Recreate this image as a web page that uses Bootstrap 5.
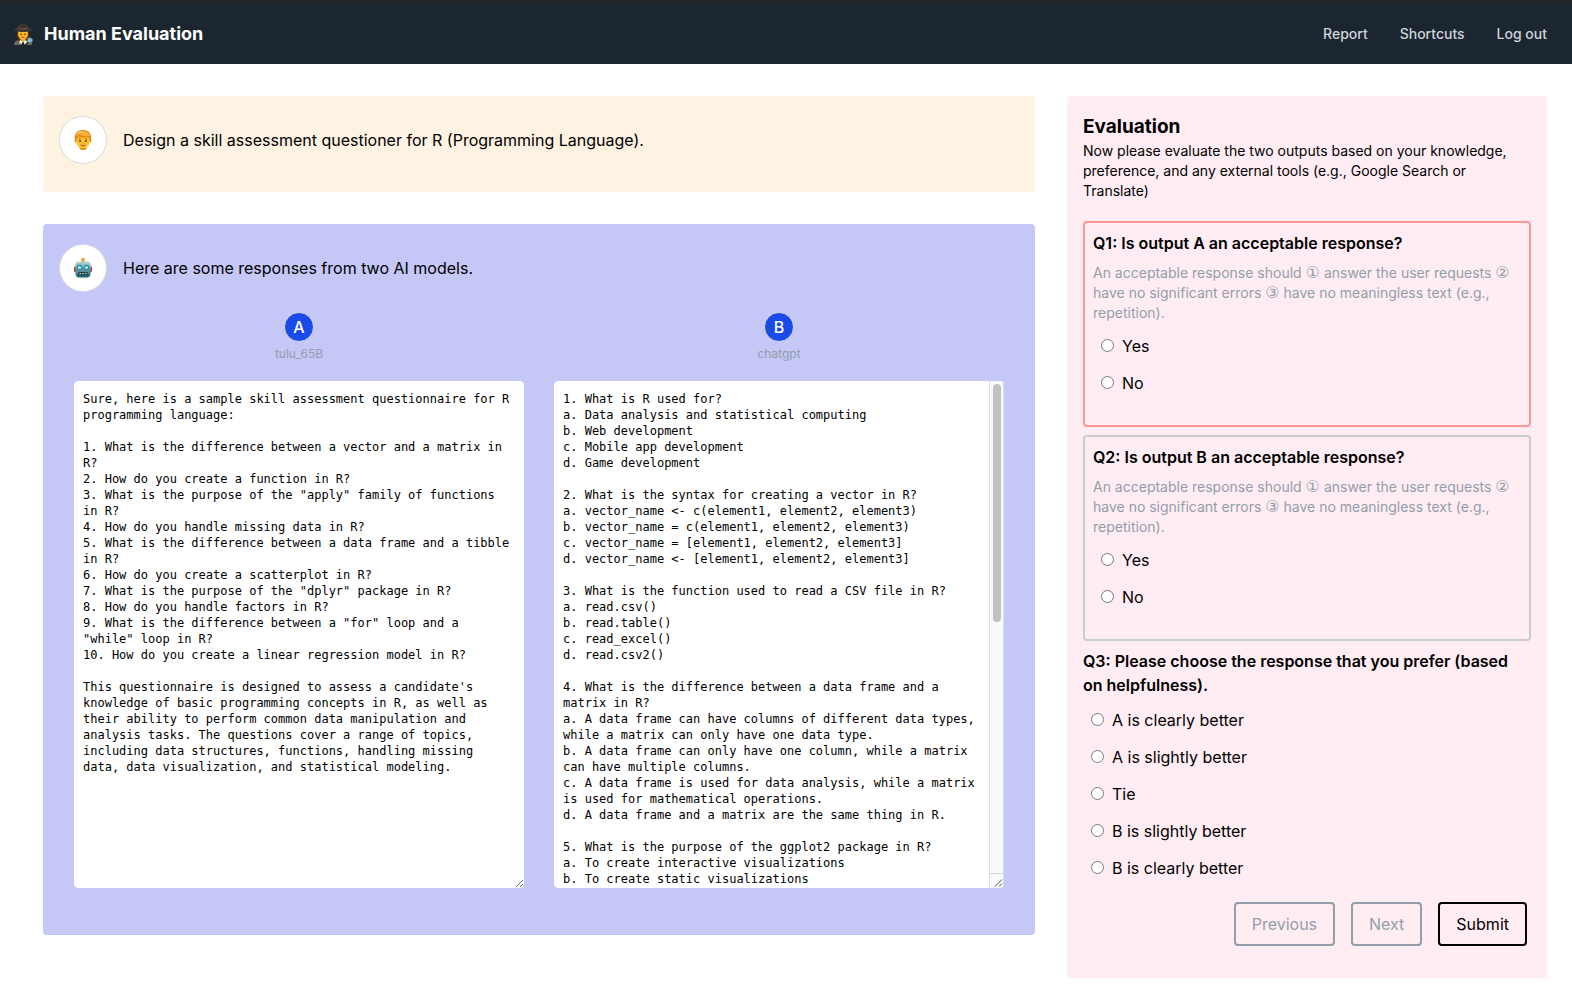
<!DOCTYPE html>
<html lang="en">
<head>
<meta charset="utf-8">
<meta name="viewport" content="width=device-width, initial-scale=1">
<title>Human Evaluation</title>
<link href="https://cdn.jsdelivr.net/npm/bootstrap@5.3.0/dist/css/bootstrap.min.css" rel="stylesheet">
<style>
  body { font-family: Inter, "Liberation Sans", sans-serif; font-size: 16px; line-height: 24px; color: #000; background: #fff; }
  .topbar { background: #1c2630; border-top: 4px solid #212526; padding: 16px 25px 16px 12px; }
  .topbar .navbar-brand { font-size: 18px; line-height: 28px; font-weight: 700; gap: 10px; padding: 0; color: #fff; }
  .topbar .navbar-nav .nav-link { font-size: 14px; line-height: 20px; font-weight: 500; color: #ced4da; padding: 0; }
  .topbar .navbar-nav { gap: 32px; }
  .page-wrap { padding: 32px 25px 29px 43px; }
  .page-grid { --bs-gutter-x: 32px; --bs-gutter-y: 32px; }
  .panel { border-radius: 4px; padding: 16px; }
  .panel-prompt { background: #fef2e2; padding: 20px 16px 28px; }
  .panel-model { background: #c5c7f7; padding: 20px 16px 47px; }
  .panel-eval { background: #ffedf3; }
  .avatar { width: 48px; height: 48px; border: 1px solid #dcdcdc; border-radius: 50%; background: #fff; flex: none; }
  .answers { --bs-gutter-x: 30px; margin: 20px 0 0; }
  .marker { width: 30px; height: 30px; border-radius: 50%; background: #194bea; border: 1px solid #d5d5dc; color: #fff; font-weight: 500; }
  .model-name { font-size: 12px; line-height: 16px; color: #929eaa; margin: 4px 0 19px; }
  .answer-box { border-radius: 4px; overflow: hidden; }
  .answer-text { font-family: "DejaVu Sans Mono", monospace; font-size: 12px; line-height: 16px; color: #000; height: 507px; padding: 10px 9px; border: 0; border-radius: 4px; resize: vertical; }
  .answer-text.scrolling { padding-right: 24px; scrollbar-width: none; }
  .scroll-rail { width: 15px; background: #fafafa; border: 1px solid #dedede; border-width: 0 1px; pointer-events: none; }
  .scroll-thumb { width: 8px; height: 47%; margin: 3px auto 0; border-radius: 4px; background: #c1c1c1; }
  .scroll-corner { height: 15px; border-top: 1px solid #d4d4d4; }
  .eval-title { font-size: 19px; line-height: 29px; font-weight: 700; margin: 0; }
  .eval-intro { font-size: 14px; line-height: 20px; margin: 0 0 20px; }
  .question { border: 2px solid #c6ccd2; border-radius: 4px; padding: 8px 8px 17px; margin: 0 0 8px; }
  .question.active { border-color: #ff9595; }
  .question-title { font-size: 16px; line-height: 24px; font-weight: 600; margin: 0 0 8px; }
  .question-title.plain { margin-bottom: 11px; }
  .question-hint { font-size: 14px; line-height: 20px; color: #929eaa; margin: 0 0 11px; }
  .circled { font-family: "DejaVu Sans", sans-serif; font-size: 16px; line-height: 1; }
  .choice { padding-left: 8px; gap: 8px; height: 24px; margin-bottom: 13px; }
  .choice input { width: 13px; height: 13px; margin: 0 0 1px; flex: none; }
  .eval-actions { gap: 16px; padding: 0 4px 16px 0; margin-top: 22px; }
  .btn-step { --bs-btn-padding-x: 16px; --bs-btn-padding-y: 8px; --bs-btn-border-width: 2px; --bs-btn-border-radius: 4px; --bs-btn-line-height: 24px; --bs-btn-font-size: 16px;
    --bs-btn-color: #929eaa; --bs-btn-border-color: #929eaa; --bs-btn-hover-color: #000; --bs-btn-hover-border-color: #000; }
  .btn-final { --bs-btn-color: #000; --bs-btn-border-color: #000; }
</style>
</head>
<body>
<nav class="navbar navbar-expand topbar">
  <a class="navbar-brand d-flex align-items-center m-0" href="#">
    <svg width="22" height="24" viewBox="0 0 22 24" aria-hidden="true">
      <path d="M2 23c0-4 3-5 6-5.500h6c3 .5 6 1.500 6 5.500z" fill="#6d6a60"/>
      <path d="M5.500 9c-1.500 3-1 6 1 8l-2 1.500 4 1h5l4-1-2-1.500c2-2 2.500-5 1-8z" fill="#54331f"/>
      <path d="M8.500 16h5v3.500L11 21.500l-2.500-2z" fill="#e8a31c"/>
      <ellipse cx="11" cy="12" rx="5" ry="5.800" fill="#ffb92c"/>
      <path d="M8 18l3 2 3-2 1 2.500-2.500 1.500L11 20.500 9.500 22 7 20.500z" fill="#f4f4ef"/>
      <path d="M10.400 20h1.200l.8 3H9.600z" fill="#24211f"/>
      <path d="M2 7.500C4 5.500 5.500 6 6 4.500 6.800 1.800 8.500 1.300 11 2c2.500-.7 4.200-.2 5 2.500.5 1.500 2 1 4 3 .5 1.500-4 2.500-9 2.500S1.500 9 2 7.500z" fill="#3b3532"/>
      <path d="M6 5.500c2.500 1 7.500 1 10 0v1.400c-2.500 1-7.500 1-10 0z" fill="#6d4a3a"/>
      <circle cx="9" cy="12.300" r=".8" fill="#3a2414"/><circle cx="13" cy="12.300" r=".8" fill="#3a2414"/>
      <path d="M9.300 15.200h3.400" stroke="#b5382b" stroke-width=".9"/>
      <circle cx="17.800" cy="18.300" r="2.600" fill="#83bfd6" stroke="#637784"/>
      <path d="M16 20.500l-2 2.300" stroke="#2b2b2c" stroke-width="1.400"/>
    </svg>
    <span>Human Evaluation</span>
  </a>
  <div class="navbar-nav ms-auto">
    <a class="nav-link" href="#">Report</a>
    <a class="nav-link" href="#">Shortcuts</a>
    <a class="nav-link" href="#">Log out</a>
  </div>
</nav>

<main class="container-fluid page-wrap">
  <div class="row page-grid mt-0">
    <div class="col-8 mt-0 d-flex flex-column gap-4">
      <section class="panel panel-prompt mb-2">
        <div class="d-flex align-items-center gap-3">
          <span class="avatar d-flex align-items-center justify-content-center">
            <svg width="18" height="22" viewBox="0 0 18 22" aria-hidden="true">
              <path d="M5.500 16h7v3.500c-1 2-6 2-7 0z" fill="#e89515"/>
              <circle cx="2" cy="12" r="1.600" fill="#eda31b"/><circle cx="16" cy="12" r="1.600" fill="#eda31b"/>
              <path d="M2.300 7h13.400v5.500c0 4-3 6.700-6.700 6.700s-6.700-2.700-6.700-6.700z" fill="#ffbf2e"/>
              <path d="M1.200 12C-.5 6 2 1.500 7 1.200c6.500-.8 11.500 2.300 9.800 10.800h-.9c-.3-2-.9-3-1.900-4-4 .9-7.500.5-9.500-.8C3.500 8.500 2.500 9.500 2.200 12z" fill="#dd8714"/>
              <path d="M1.500 7.500C2 3.500 4.500 2 8 2c4-.3 7.500 1.300 8 5-3.500.4-8 .3-11-1.700C4 6 3 7 1.500 7.500z" fill="#f8b03d"/>
              <path d="M3 4.500c2-1.800 4.500-2 7-1.500" fill="none" stroke="#ffd782" stroke-width="1"/>
              <ellipse cx="6" cy="12" rx=".9" ry="1.100" fill="#4b2d12"/><ellipse cx="12" cy="12" rx=".9" ry="1.100" fill="#4b2d12"/>
              <path d="M4.700 10q1.200-.8 2.400 0M10.900 10q1.200-.8 2.400 0" fill="none" stroke="#a55d12" stroke-width=".8"/>
              <path d="M8.400 14h1.200" stroke="#d9801a"/><path d="M6.800 16q2.200 1.300 4.400 0" fill="none" stroke="#a94923"/>
            </svg>
          </span>
          <span>Design a skill assessment questioner for R (Programming Language).</span>
        </div>
      </section>

      <section class="panel panel-model">
        <div class="d-flex align-items-center gap-3">
          <span class="avatar d-flex align-items-center justify-content-center">
            <svg width="20" height="22" viewBox="0 0 20 22" aria-hidden="true">
              <defs><linearGradient id="shell" x1="0" y1="0" x2="0" y2="1"><stop offset="0" stop-color="#c3d3d3"/><stop offset=".45" stop-color="#67a9ad"/><stop offset="1" stop-color="#14646c"/></linearGradient></defs>
              <rect x="1" y="9.500" width="3" height="5.500" rx="1" fill="#b8343c"/><rect x="16" y="9.500" width="3" height="5.500" rx="1" fill="#b8343c"/>
              <rect x="8.700" y="3" width="2.600" height="3" fill="#809698"/><circle cx="10" cy="2.600" r="1.900" fill="#f3a52a"/>
              <path d="M6 4.500h8c3 0 3.600 2 3.600 4.500v6c0 4-1 5.500-4 5.500H6.400c-3 0-4-1.500-4-5.500V9C2.400 6.500 3 4.500 6 4.500z" fill="url(#shell)"/>
              <circle cx="6.500" cy="10.500" r="2.800" fill="#188caa"/><circle cx="13.500" cy="10.500" r="2.800" fill="#188caa"/>
              <circle cx="6.500" cy="10.500" r="1.600" fill="#b6f4fa"/><circle cx="13.500" cy="10.500" r="1.600" fill="#b6f4fa"/>
              <path d="M10 11l1.200 2.200H8.800z" fill="#e34f3e"/>
              <rect x="5" y="15" width="10" height="3.400" rx="1.500" fill="#223f45"/>
              <path d="M6.500 16.700h1.400m1.400 0h1.400m1.400 0h1.400" stroke="#c4d9d9" stroke-width="1.300"/>
            </svg>
          </span>
          <span>Here are some responses from two AI models.</span>
        </div>

        <div class="row answers">
          <div class="col-6">
            <div class="d-flex flex-column align-items-center">
              <span class="marker d-flex align-items-center justify-content-center">A</span>
              <label class="model-name" for="answer-a">tulu_65B</label>
            </div>
            <div class="answer-box">
              <textarea class="answer-text d-block w-100" id="answer-a" readonly>Sure, here is a sample skill assessment questionnaire for R programming language:

1. What is the difference between a vector and a matrix in R?
2. How do you create a function in R?
3. What is the purpose of the "apply" family of functions in R?
4. How do you handle missing data in R?
5. What is the difference between a data frame and a tibble in R?
6. How do you create a scatterplot in R?
7. What is the purpose of the "dplyr" package in R?
8. How do you handle factors in R?
9. What is the difference between a "for" loop and a "while" loop in R?
10. How do you create a linear regression model in R?

This questionnaire is designed to assess a candidate's knowledge of basic programming concepts in R, as well as their ability to perform common data manipulation and analysis tasks. The questions cover a range of topics, including data structures, functions, handling missing data, data visualization, and statistical modeling.</textarea>
            </div>
          </div>
          <div class="col-6">
            <div class="d-flex flex-column align-items-center">
              <span class="marker d-flex align-items-center justify-content-center">B</span>
              <label class="model-name" for="answer-b">chatgpt</label>
            </div>
            <div class="answer-box position-relative">
              <textarea class="answer-text scrolling d-block w-100" id="answer-b" readonly>1. What is R used for?
a. Data analysis and statistical computing
b. Web development
c. Mobile app development
d. Game development

2. What is the syntax for creating a vector in R?
a. vector_name <- c(element1, element2, element3)
b. vector_name = c(element1, element2, element3)
c. vector_name = [element1, element2, element3]
d. vector_name <- [element1, element2, element3]

3. What is the function used to read a CSV file in R?
a. read.csv()
b. read.table()
c. read_excel()
d. read.csv2()

4. What is the difference between a data frame and a matrix in R?
a. A data frame can have columns of different data types, while a matrix can only have one data type.
b. A data frame can only have one column, while a matrix can have multiple columns.
c. A data frame is used for data analysis, while a matrix is used for mathematical operations.
d. A data frame and a matrix are the same thing in R.

5. What is the purpose of the ggplot2 package in R?
a. To create interactive visualizations
b. To create static visualizations
c. To perform statistical analysis
d. To manipulate data

6. What is the function used to install packages in R?
a. install.packages()
b. library()
c. require()
d. load()

7. What is the purpose of the dplyr package in R?
a. To create visualizations
b. To manipulate data
c. To perform statistical tests
d. To read data files

8. What does the function length() return in R?
a. The number of elements in a vector
b. The number of rows in a data frame
c. The size of a file
d. The sum of a vector

9. Which function returns the mean of a vector in R?
a. mean()
b. average()
c. median()
d. sum()</textarea>
              <div class="scroll-rail position-absolute top-0 end-0 h-100 d-flex flex-column" aria-hidden="true">
                <div class="scroll-thumb"></div>
                <div class="scroll-corner mt-auto">
                  <svg class="d-block" width="13" height="14" viewBox="0 0 13 14"><path d="M5 12.500l7-7M9 12.500l3-3" stroke="#555" stroke-width="1"/></svg>
                </div>
              </div>
            </div>
          </div>
        </div>
      </section>
    </div>

    <aside class="col-4 mt-0">
      <form class="panel panel-eval">
        <h2 class="eval-title">Evaluation</h2>
        <p class="eval-intro">Now please evaluate the two outputs based on your knowledge, preference, and any external tools (e.g., Google Search or Translate)</p>

        <div class="question active" role="radiogroup" aria-labelledby="q1">
          <h3 class="question-title" id="q1">Q1: Is output A an acceptable response?</h3>
          <p class="question-hint">An acceptable response should <span class="circled">①</span> answer the user requests <span class="circled">②</span> have no significant errors <span class="circled">③</span> have no meaningless text (e.g., repetition).</p>
          <div class="choice d-flex align-items-center"><input type="radio" name="q1" id="q1-yes"><label for="q1-yes">Yes</label></div>
          <div class="choice d-flex align-items-center"><input type="radio" name="q1" id="q1-no"><label for="q1-no">No</label></div>
        </div>

        <div class="question" role="radiogroup" aria-labelledby="q2">
          <h3 class="question-title" id="q2">Q2: Is output B an acceptable response?</h3>
          <p class="question-hint">An acceptable response should <span class="circled">①</span> answer the user requests <span class="circled">②</span> have no significant errors <span class="circled">③</span> have no meaningless text (e.g., repetition).</p>
          <div class="choice d-flex align-items-center"><input type="radio" name="q2" id="q2-yes"><label for="q2-yes">Yes</label></div>
          <div class="choice d-flex align-items-center"><input type="radio" name="q2" id="q2-no"><label for="q2-no">No</label></div>
        </div>

        <div role="radiogroup" aria-labelledby="q3">
          <h3 class="question-title plain" id="q3">Q3: Please choose the response that you prefer (based on helpfulness).</h3>
          <div class="choice d-flex align-items-center"><input type="radio" name="q3" id="q3-a2"><label for="q3-a2">A is clearly better</label></div>
          <div class="choice d-flex align-items-center"><input type="radio" name="q3" id="q3-a1"><label for="q3-a1">A is slightly better</label></div>
          <div class="choice d-flex align-items-center"><input type="radio" name="q3" id="q3-tie"><label for="q3-tie">Tie</label></div>
          <div class="choice d-flex align-items-center"><input type="radio" name="q3" id="q3-b1"><label for="q3-b1">B is slightly better</label></div>
          <div class="choice d-flex align-items-center"><input type="radio" name="q3" id="q3-b2"><label for="q3-b2">B is clearly better</label></div>
        </div>

        <div class="eval-actions d-flex justify-content-end">
          <button class="btn btn-step" type="button">Previous</button>
          <button class="btn btn-step" type="button">Next</button>
          <button class="btn btn-step btn-final" type="submit">Submit</button>
        </div>
      </form>
    </aside>
  </div>
</main>
<script src="https://cdn.jsdelivr.net/npm/bootstrap@5.3.0/dist/js/bootstrap.bundle.min.js"></script>
</body>
</html>
